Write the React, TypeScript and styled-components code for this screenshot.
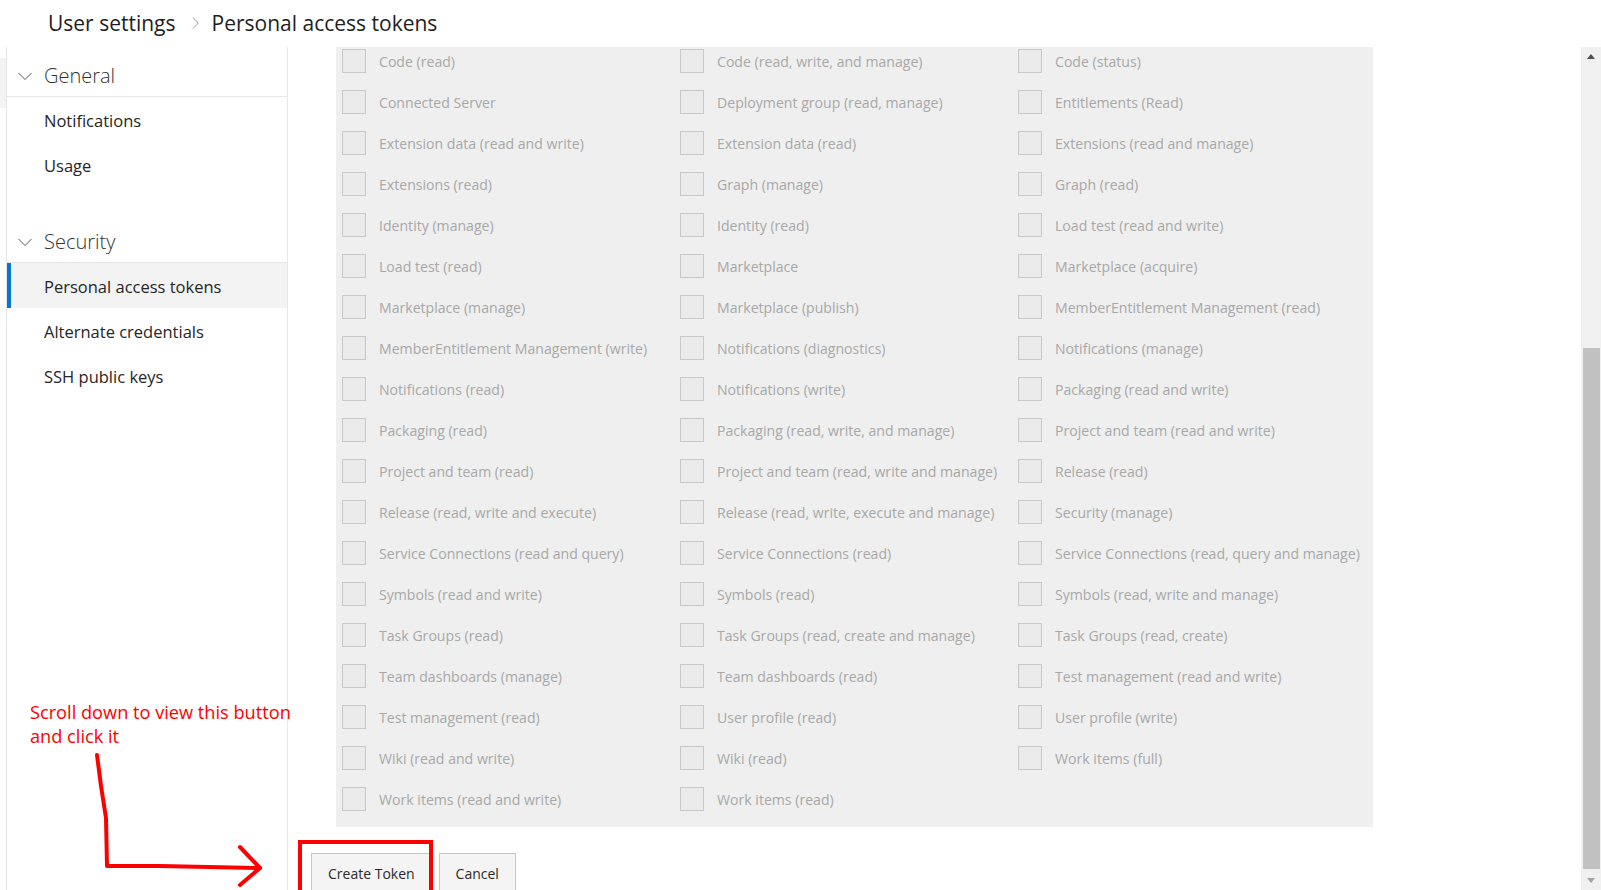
import styled, { createGlobalStyle } from "styled-components";

const GlobalStyle = createGlobalStyle`
  html, body {
    margin: 0;
    padding: 0;
    background: #ffffff;
    overflow: hidden;
  }
  body {
    font-family: "Open Sans", "Noto Sans", "Liberation Sans", sans-serif;
    color: #212121;
  }
`;

const scopes = [
  "Code (read)", "Code (read, write, and manage)", "Code (status)",
  "Connected Server", "Deployment group (read, manage)", "Entitlements (Read)",
  "Extension data (read and write)", "Extension data (read)", "Extensions (read and manage)",
  "Extensions (read)", "Graph (manage)", "Graph (read)",
  "Identity (manage)", "Identity (read)", "Load test (read and write)",
  "Load test (read)", "Marketplace", "Marketplace (acquire)",
  "Marketplace (manage)", "Marketplace (publish)", "MemberEntitlement Management (read)",
  "MemberEntitlement Management (write)", "Notifications (diagnostics)", "Notifications (manage)",
  "Notifications (read)", "Notifications (write)", "Packaging (read and write)",
  "Packaging (read)", "Packaging (read, write, and manage)", "Project and team (read and write)",
  "Project and team (read)", "Project and team (read, write and manage)", "Release (read)",
  "Release (read, write and execute)", "Release (read, write, execute and manage)", "Security (manage)",
  "Service Connections (read and query)", "Service Connections (read)", "Service Connections (read, query and manage)",
  "Symbols (read and write)", "Symbols (read)", "Symbols (read, write and manage)",
  "Task Groups (read)", "Task Groups (read, create and manage)", "Task Groups (read, create)",
  "Team dashboards (manage)", "Team dashboards (read)", "Test management (read and write)",
  "Test management (read)", "User profile (read)", "User profile (write)",
  "Wiki (read and write)", "Wiki (read)", "Work items (full)",
  "Work items (read and write)", "Work items (read)",
];

const Page = styled.div`
  position: relative;
  display: flex;
  flex-direction: column;
  width: 100%;
  height: 890px;
  overflow: hidden;
`;

const Header = styled.div`
  display: flex;
  align-items: center;
  height: 46px;
  padding-left: 48px;
  padding-bottom: 1px;
  font-size: 21px;
  line-height: 28px;
  color: #1e1e1e;
  flex-shrink: 0;
`;

const Crumb = styled.span`
  white-space: nowrap;
`;

const CrumbSeparator = styled.svg`
  width: 7px;
  height: 12px;
  margin: 0 13px 0 16px;
  flex-shrink: 0;
`;

const Body = styled.div`
  display: flex;
  flex: 1;
  min-height: 0;
`;

const Gutter = styled.div`
  width: 6px;
  flex-shrink: 0;
  padding-top: 11px;
`;

const GutterBlock = styled.div`
  height: 50px;
  background: #f3f3f3;
`;

const Sidebar = styled.nav`
  width: 280px;
  flex-shrink: 0;
  border-left: 1px solid #e6e6e6;
  border-right: 1px solid #e8e8e8;
  display: flex;
  flex-direction: column;
  gap: 26px;
`;

const NavGroup = styled.div`
  display: flex;
  flex-direction: column;
`;

const GroupHeader = styled.div`
  display: flex;
  align-items: flex-end;
  height: 44px;
  padding: 0 0 5px 11px;
  border-bottom: 1px solid #e6e6e6;
  font-size: 20px;
  font-weight: 300;
  line-height: 30px;
  color: #333333;
`;

const GroupChevron = styled.svg`
  width: 14px;
  height: 9px;
  margin: 0 12px 10px 0;
  flex-shrink: 0;
`;

const NavItem = styled.div<{ $active?: boolean }>`
  height: 43px;
  padding-top: 2px;
  display: flex;
  align-items: center;
  padding-left: 37px;
  font-size: 16.5px;
  color: #262626;
  background: ${(p) => (p.$active ? "#f3f3f3" : "transparent")};
  box-shadow: ${(p) => (p.$active ? "inset 4px 0 0 #0078d4" : "none")};
`;

const Main = styled.main`
  flex: 1;
  min-width: 0;
  padding-left: 23px;
  display: flex;
  flex-direction: column;
`;

const ScopePanel = styled.div`
  width: 1006px;
  margin-left: 25px;
  padding: 2px 25px 16px 6px;
  background: #efefef;
  display: grid;
  grid-template-columns: 338px 338px 1fr;
  row-gap: 17px;
`;

const ScopeRow = styled.label`
  display: flex;
  align-items: center;
  gap: 13px;
  height: 24px;
  white-space: nowrap;
`;

const CheckBox = styled.span`
  width: 22px;
  height: 22px;
  border: 1px solid #c8c8c8;
  background: #ebebeb;
  flex-shrink: 0;
`;

const ScopeLabel = styled.span`
  font-size: 14.1px;
  color: #a8a8a8;
`;

const Actions = styled.div`
  display: flex;
  gap: 7px;
  margin-top: 26px;
`;

const Button = styled.button`
  height: 40px;
  padding: 0 16px;
  border: 1px solid #c8c8c8;
  background: #f4f4f4;
  font-family: inherit;
  font-size: 14px;
  color: #2b2b2b;
  border-radius: 0;
`;

const ScrollBar = styled.div`
  width: 20px;
  flex-shrink: 0;
  background: #f0f0f0;
  display: flex;
  flex-direction: column;
`;

const ScrollArrow = styled.div<{ $down?: boolean }>`
  height: 20px;
  display: flex;
  align-items: center;
  justify-content: center;

  &::before {
    content: "";
    width: 0;
    height: 0;
    border-left: 4.5px solid transparent;
    border-right: 4.5px solid transparent;
    ${(p) =>
      p.$down
        ? "border-top: 5px solid #a3a3a3; margin-top: 1px;"
        : "border-bottom: 5px solid #505050; margin-top: -2px;"}
  }
`;

const ScrollTrack = styled.div`
  flex: 1;
  display: flex;
  flex-direction: column;
  justify-content: flex-end;
  padding: 0 1px 1px 2px;
`;

const ScrollThumb = styled.div`
  height: 521px;
  background: #c1c1c1;
`;

const Note = styled.div`
  position: absolute;
  left: 30px;
  top: 700px;
  font-size: 18.2px;
  line-height: 24px;
  color: #ff0000;
  white-space: nowrap;
`;

const Markup = styled.svg`
  position: absolute;
  left: 0;
  top: 0;
  pointer-events: none;
`;

const App = () => {
  return (
    <Page>
      <GlobalStyle />
      <Header>
        <Crumb>User settings</Crumb>
        <CrumbSeparator viewBox="0 0 7 12">
          <path d="M1 0.5 L6.2 6 L1 11.5" fill="none" stroke="#a0a0a0" strokeWidth="1" />
        </CrumbSeparator>
        <Crumb>Personal access tokens</Crumb>
      </Header>

      <Body>
        <Gutter>
          <GutterBlock />
        </Gutter>

        <Sidebar>
          <NavGroup>
            <GroupHeader>
              <GroupChevron viewBox="0 0 14 9">
                <path d="M0.5 1 L7 7.5 L13.5 1" fill="none" stroke="#555" strokeWidth="1" />
              </GroupChevron>
              General
            </GroupHeader>
            <NavItem>Notifications</NavItem>
            <NavItem>Usage</NavItem>
          </NavGroup>
          <NavGroup>
            <GroupHeader>
              <GroupChevron viewBox="0 0 14 9">
                <path d="M0.5 1 L7 7.5 L13.5 1" fill="none" stroke="#555" strokeWidth="1" />
              </GroupChevron>
              Security
            </GroupHeader>
            <NavItem $active>Personal access tokens</NavItem>
            <NavItem>Alternate credentials</NavItem>
            <NavItem>SSH public keys</NavItem>
          </NavGroup>
        </Sidebar>

        <Main>
          <ScopePanel>
            {scopes.map((scope) => (
              <ScopeRow key={scope}>
                <CheckBox />
                <ScopeLabel>{scope}</ScopeLabel>
              </ScopeRow>
            ))}
          </ScopePanel>
          <Actions>
            <Button>Create Token</Button>
            <Button>Cancel</Button>
          </Actions>
        </Main>

        <ScrollBar>
          <ScrollArrow />
          <ScrollTrack>
            <ScrollThumb />
          </ScrollTrack>
          <ScrollArrow $down />
        </ScrollBar>
      </Body>

      <Note>
        Scroll down to view this button
        <br />
        and click it
      </Note>
      <Markup width="1601" height="890" viewBox="0 0 1601 890">
        <g fill="none" stroke="#ff0000" strokeWidth="4" strokeLinecap="round" strokeLinejoin="round">
          <polyline points="97,755 101,786 106,818 107,866 160,866 260,868" />
          <polyline points="240,847 260,868 240,885" />
          <rect x="300" y="842" width="131" height="70" strokeLinecap="butt" strokeLinejoin="miter" />
        </g>
      </Markup>
    </Page>
  );
};

export default App;
